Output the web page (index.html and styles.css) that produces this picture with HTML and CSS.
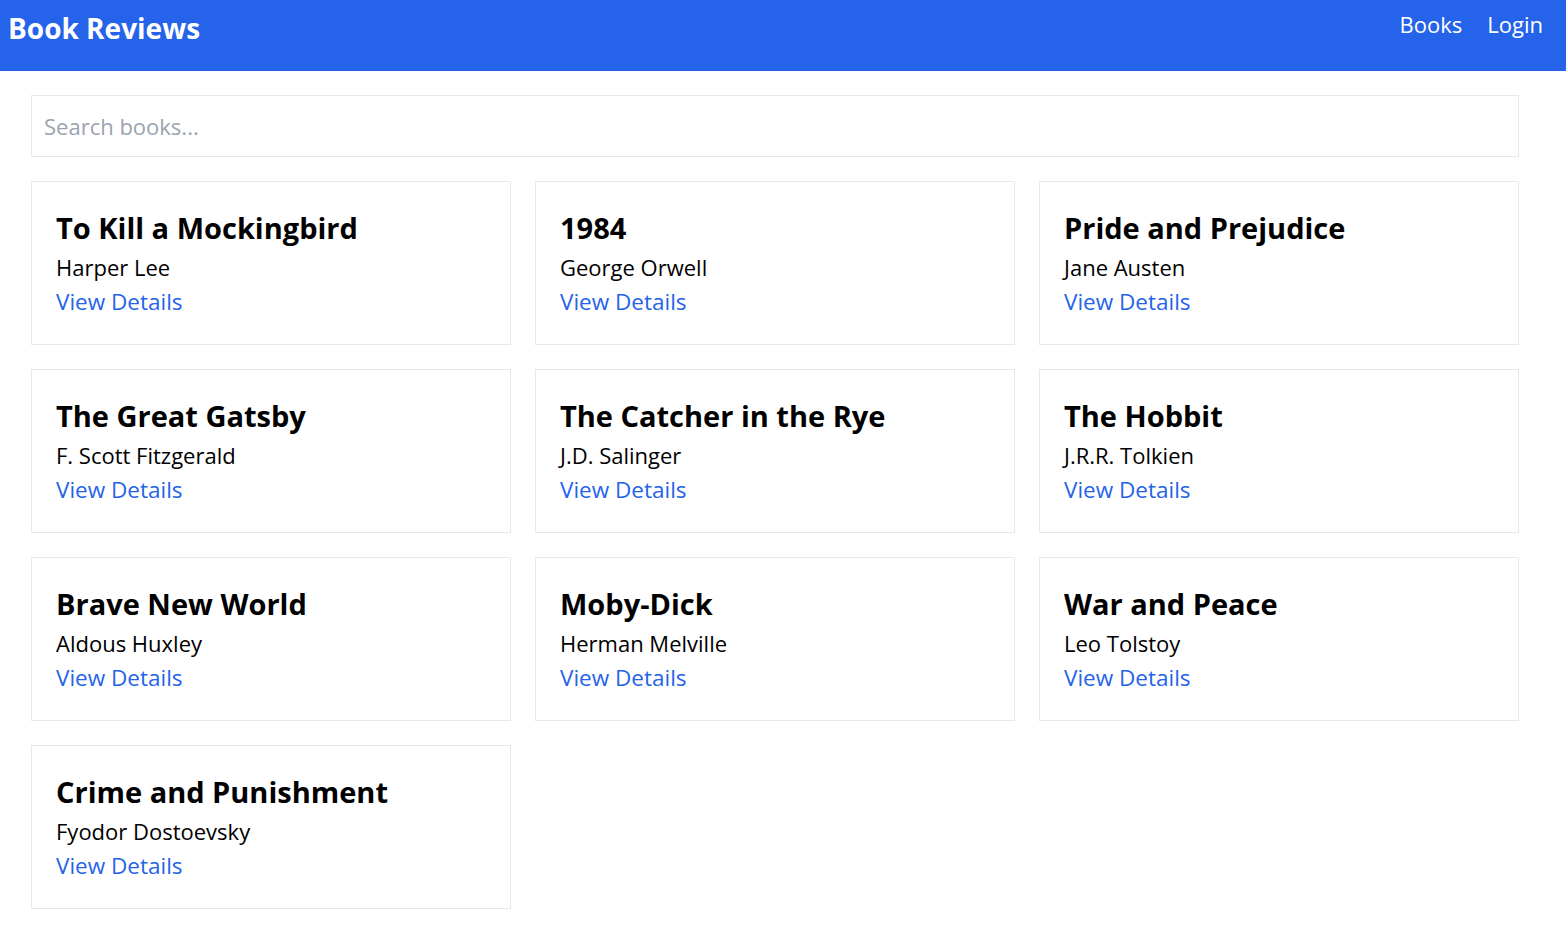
FILE: index.html
```html
<!DOCTYPE html>
<html lang="en">
<head>
<meta charset="utf-8">
<title>Book Reviews</title>
<link rel="stylesheet" href="styles.css">
</head>
<body>
<header class="topbar">
  <a class="brand" href="#">Book Reviews</a>
  <nav class="nav">
    <a href="#">Books</a>
    <a href="#">Login</a>
  </nav>
</header>
<main class="main">
  <input class="search" type="text" placeholder="Search books...">
  <div class="grid">
    <div class="card"><h2 class="card-title">To Kill a Mockingbird</h2><p class="card-author">Harper Lee</p><a class="card-link" href="#">View Details</a></div>
    <div class="card"><h2 class="card-title">1984</h2><p class="card-author">George Orwell</p><a class="card-link" href="#">View Details</a></div>
    <div class="card"><h2 class="card-title">Pride and Prejudice</h2><p class="card-author">Jane Austen</p><a class="card-link" href="#">View Details</a></div>
    <div class="card"><h2 class="card-title">The Great Gatsby</h2><p class="card-author">F. Scott Fitzgerald</p><a class="card-link" href="#">View Details</a></div>
    <div class="card"><h2 class="card-title">The Catcher in the Rye</h2><p class="card-author">J.D. Salinger</p><a class="card-link" href="#">View Details</a></div>
    <div class="card"><h2 class="card-title">The Hobbit</h2><p class="card-author">J.R.R. Tolkien</p><a class="card-link" href="#">View Details</a></div>
    <div class="card"><h2 class="card-title">Brave New World</h2><p class="card-author">Aldous Huxley</p><a class="card-link" href="#">View Details</a></div>
    <div class="card"><h2 class="card-title">Moby-Dick</h2><p class="card-author">Herman Melville</p><a class="card-link" href="#">View Details</a></div>
    <div class="card"><h2 class="card-title">War and Peace</h2><p class="card-author">Leo Tolstoy</p><a class="card-link" href="#">View Details</a></div>
    <div class="card"><h2 class="card-title">Crime and Punishment</h2><p class="card-author">Fyodor Dostoevsky</p><a class="card-link" href="#">View Details</a></div>
  </div>
</main>
</body>
</html>
```

FILE: styles.css
```css
* { box-sizing: border-box; }
html, body { margin: 0; padding: 0; }
body {
  font-family: "Open Sans", "Noto Sans", sans-serif;
  color: #000;
  background: #fff;
}
.topbar {
  height: 71px;
  background: #2563eb;
  display: flex;
  justify-content: space-between;
  align-items: flex-start;
  padding: 8px 23px 0 8px;
}
.brand {
  color: #fff;
  text-decoration: none;
  font-weight: 700;
  font-size: 28px;
  line-height: 40px;
}
.nav {
  display: flex;
  gap: 25px;
  margin-top: 0;
}
.nav a {
  color: #fff;
  text-decoration: none;
  font-size: 22px;
  line-height: 32px;
}
.main {
  width: 1550px;
  padding: 24px 31px 0 31px;
}
.search {
  display: block;
  width: 1488px;
  height: 62px;
  border: 1px solid #e5e7eb;
  padding: 0 12px;
  font-family: inherit;
  font-size: 22px;
  color: #111;
  outline: none;
  border-radius: 0;
}
.search::placeholder { color: #9ca3af; }
.grid {
  margin-top: 24px;
  width: 1488px;
  display: grid;
  grid-template-columns: repeat(3, 1fr);
  gap: 24px;
}
.card {
  border: 1px solid #e5e7eb;
  padding: 24px;
  height: 164px;
}
.card-title {
  margin: 0;
  font-size: 29px;
  font-weight: 700;
  line-height: 43px;
}
.card-author {
  margin: 0;
  font-size: 22px;
  line-height: 36px;
}
.card-link {
  display: block;
  color: #2563eb;
  text-decoration: none;
  font-size: 22.5px;
  line-height: 34px;
}
```
